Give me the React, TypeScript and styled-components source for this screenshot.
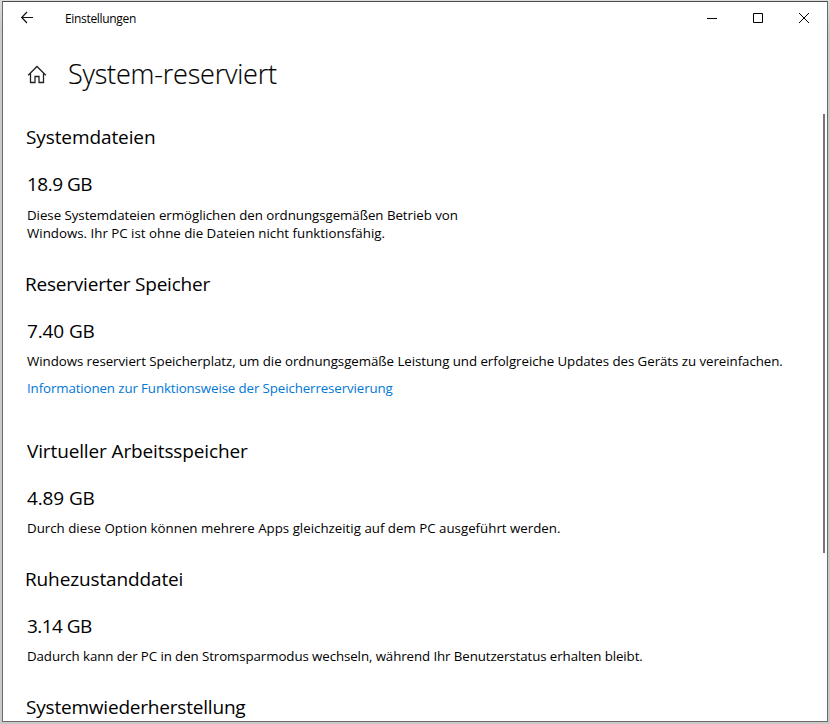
import React from 'react';
import styled, { createGlobalStyle } from 'styled-components';

const GlobalStyle = createGlobalStyle`
  * { box-sizing: border-box; }
  body {
    margin: 0;
    overflow: hidden;
    color: #000;
    font-family: "Open Sans", "Noto Sans", sans-serif;
  }
`;

const Desktop = styled.div`
  width: 830px;
  height: 724px;
  padding: 1px 2px 2px;
  background: linear-gradient(#dcdcdc, #c9c9c9 30px);
`;

const Window = styled.main`
  display: flex;
  flex-direction: column;
  width: 826px;
  height: 721px;
  overflow: hidden;
  background: #fff;
  border: 1px solid #6b6b6b;
  border-top-color: #4c4c4c;
`;

const TitleBar = styled.header`
  display: flex;
  flex: none;
  height: 32px;
`;

const BackButton = styled.button`
  display: block;
  width: 62px;
  height: 32px;
  padding: 0;
  border: 0;
  background: none;
  svg { display: block; }
`;

const WindowTitle = styled.span<{ $tracking: number }>`
  flex: 1;
  font-size: 12px;
  line-height: 34px;
  letter-spacing: ${(p) => p.$tracking}px;
`;

const CaptionButton = styled.button`
  display: block;
  width: 46px;
  height: 32px;
  padding: 0;
  border: 0;
  background: none;
  svg { display: block; }
`;

const PageHeader = styled.div`
  display: flex;
  flex: none;
  align-items: center;
  height: 82px;
  padding-left: 24px;
`;

const PageTitle = styled.h1<{ $tracking: number }>`
  margin: -2px 0 0 21px;
  font-size: 27px;
  font-weight: 300;
  line-height: 40px;
  letter-spacing: ${(p) => p.$tracking}px;
  -webkit-text-stroke: 0.15px #000;
`;

const Body = styled.div`
  display: flex;
  flex: 1;
  justify-content: space-between;
  min-height: 0;
`;

const Sections = styled.div`
  padding: 7px 0 0 22px;
`;

const Section = styled.section<{ $after?: number }>`
  display: flex;
  flex-direction: column;
  margin-bottom: ${(p) => p.$after ?? 28}px;
`;

const Heading = styled.h2<{ $tracking: number; $inset?: number }>`
  margin: 0 0 0 ${(p) => p.$inset ?? 0}px;
  font-size: 19px;
  font-weight: 400;
  line-height: 28px;
  white-space: nowrap;
  letter-spacing: ${(p) => p.$tracking}px;
`;

const Amount = styled.div<{ $tracking: number }>`
  margin: 19px 0 0 2px;
  font-size: 19px;
  line-height: 28px;
  letter-spacing: ${(p) => p.$tracking}px;
`;

const Description = styled.div<{ $gap?: number }>`
  margin: ${(p) => p.$gap ?? 7}px 0 0 2px;
`;

const TextLine = styled.div<{ $tracking: number }>`
  font-size: 13.3px;
  line-height: 18px;
  white-space: nowrap;
  letter-spacing: ${(p) => p.$tracking}px;
`;

const InfoLink = styled.a<{ $tracking: number }>`
  margin: 9px 0 0 2px;
  color: #0078d7;
  font-size: 13.3px;
  line-height: 18px;
  white-space: nowrap;
  text-decoration: none;
  letter-spacing: ${(p) => p.$tracking}px;
`;

const ScrollThumb = styled.div`
  width: 2px;
  height: 439px;
  margin: -2px 2px 0 0;
  background: #767676;
`;

const BackIcon = () => (
  <svg width="62" height="32" fill="none" stroke="#111" strokeWidth="1.2">
    <path d="M30 15.5H19M24 10L18.7 15.5L24 21" />
  </svg>
);

const HomeIcon = () => (
  <svg width="20" height="20" fill="none" stroke="#222" strokeWidth="1.3">
    <path d="M1.2 10.2L10 1.5L18.8 10.2M3.5 8.2V17.5H8V11.5H12V17.5H16.5V8.2" />
  </svg>
);

type Content = {
  title: [string, number];
  inset?: number;
  amount?: [string, number];
  lines?: [string, number][];
  gap?: number;
  link?: [string, number];
  after?: number;
};

const sections: Content[] = [
  {
    title: ['Systemdateien', -0.1],
    inset: 1,
    amount: ['18.9 GB', -0.5],
    lines: [
      ['Diese Systemdateien ermöglichen den ordnungsgemäßen Betrieb von', -0.04],
      ['Windows. Ihr PC ist ohne die Dateien nicht funktionsfähig.', 0],
    ],
    gap: 8,
  },
  {
    title: ['Reservierter Speicher', -0.21],
    amount: ['7.40 GB', -0.12],
    lines: [
      [
        'Windows reserviert Speicherplatz, um die ordnungsgemäße Leistung und erfolgreiche Updates des Geräts zu vereinfachen.',
        -0.05,
      ],
    ],
    link: ['Informationen zur Funktionsweise der Speicherreservierung', -0.11],
    after: 40,
  },
  {
    title: ['Virtueller Arbeitsspeicher', -0.13],
    inset: 2,
    amount: ['4.89 GB', -0.12],
    lines: [['Durch diese Option können mehrere Apps gleichzeitig auf dem PC ausgeführt werden.', 0]],
  },
  {
    title: ['Ruhezustanddatei', -0.13],
    amount: ['3.14 GB', -0.55],
    lines: [
      ['Dadurch kann der PC in den Stromsparmodus wechseln, während Ihr Benutzerstatus erhalten bleibt.', -0.09],
    ],
  },
  { title: ['Systemwiederherstellung', -0.2], inset: 1 },
];

export default function App() {
  return (
    <>
      <GlobalStyle />
      <Desktop>
        <Window>
          <TitleBar>
            <BackButton aria-label="Zurück"><BackIcon /></BackButton>
            <WindowTitle $tracking={-0.32}>Einstellungen</WindowTitle>
            <CaptionButton aria-label="Minimieren">
              <svg width="46" height="32" stroke="#000"><path d="M18 16.5H28" /></svg>
            </CaptionButton>
            <CaptionButton aria-label="Maximieren">
              <svg width="46" height="32" fill="none" stroke="#000"><path d="M18.5 11.5H27.5V20.5H18.5Z" /></svg>
            </CaptionButton>
            <CaptionButton aria-label="Schließen">
              <svg width="46" height="32" stroke="#000"><path d="M18 11L28 21M28 11L18 21" /></svg>
            </CaptionButton>
          </TitleBar>
          <PageHeader>
            <HomeIcon />
            <PageTitle $tracking={-0.2}>System-reserviert</PageTitle>
          </PageHeader>
          <Body>
            <Sections>
              {sections.map((s) => (
                <Section key={s.title[0]} $after={s.after}>
                  <Heading $tracking={s.title[1]} $inset={s.inset}>{s.title[0]}</Heading>
                  {s.amount && <Amount $tracking={s.amount[1]}>{s.amount[0]}</Amount>}
                  {s.lines && (
                    <Description $gap={s.gap}>
                      {s.lines.map(([text, tracking]) => (
                        <TextLine key={text} $tracking={tracking}>{text}</TextLine>
                      ))}
                    </Description>
                  )}
                  {s.link && <InfoLink $tracking={s.link[1]}>{s.link[0]}</InfoLink>}
                </Section>
              ))}
            </Sections>
            <ScrollThumb />
          </Body>
        </Window>
      </Desktop>
    </>
  );
}
